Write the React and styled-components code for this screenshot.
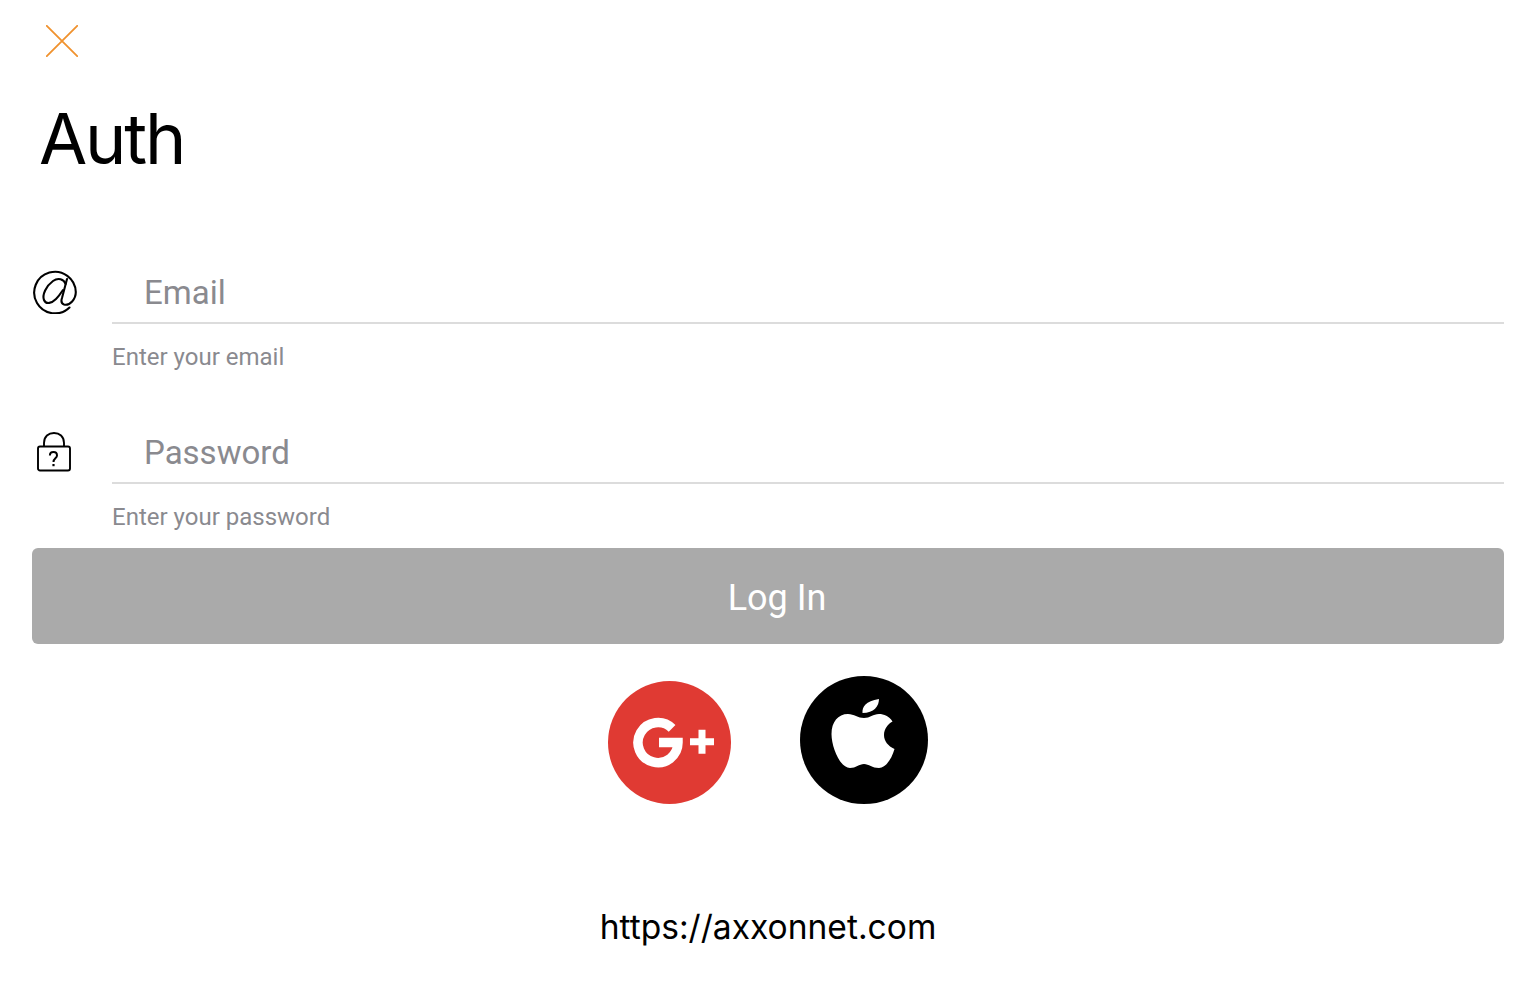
import React from 'react';
import styled, { createGlobalStyle } from 'styled-components';

const GlobalStyle = createGlobalStyle`
  html, body {
    margin: 0;
    padding: 0;
    background: #fff;
  }
  * {
    box-sizing: border-box;
  }
`;

const Page = styled.div`
  width: 1532px;
  height: 1002px;
  padding: 25px 28px 0 32px;
  overflow: hidden;
  font-family: Roboto, "Liberation Sans", sans-serif;
`;

const CloseButton = styled.button`
  display: block;
  width: 32px;
  height: 32px;
  margin-left: 14px;
  padding: 0;
  border: none;
  background: none;
  line-height: 0;
`;

const Title = styled.h1`
  margin: 40px 0 0 7px;
  height: 86px;
  font-family: Inter, "Liberation Sans", sans-serif;
  font-size: 70px;
  line-height: 84px;
  font-weight: 400;
  letter-spacing: -2.2px;
  color: #000;
`;

const Form = styled.form`
  margin-top: 84px;
`;

const Field = styled.div`
  display: flex;
  height: 160px;
`;

const FieldIcon = styled.div`
  flex: 0 0 80px;
  padding-top: ${({ top }) => top}px;
  padding-left: ${({ left }) => left}px;
  line-height: 0;
`;

const FieldBody = styled.div`
  flex: 1;
`;

const Input = styled.input`
  display: block;
  width: 100%;
  height: 57px;
  padding: 0 0 4px 32px;
  border: none;
  border-bottom: 2px solid #dcdcdc;
  outline: none;
  background: none;
  font-family: inherit;
  font-size: 33px;
  color: #222;

  &::placeholder {
    color: #8a8a8f;
    opacity: 1;
  }
`;

const Hint = styled.div`
  margin-top: 17px;
  font-size: 24px;
  line-height: 32px;
  color: #8a8a8f;
`;

const LoginButton = styled.button`
  display: block;
  width: 100%;
  height: 96px;
  margin-top: -39px;
  padding: 4px 0 0 18px;
  border: none;
  border-radius: 6px;
  background: #aaaaaa;
  font-family: inherit;
  font-size: 36px;
  color: #fff;
`;

const Socials = styled.div`
  display: flex;
  justify-content: center;
  align-items: flex-end;
  gap: 69px;
  margin-top: 32px;
`;

const SocialCircle = styled.div`
  display: flex;
  align-items: center;
  justify-content: center;
  width: ${({ size }) => size}px;
  height: ${({ size }) => size}px;
  border-radius: 50%;
  background: ${({ color }) => color};
`;

const Url = styled.div`
  margin-top: 100px;
  text-align: center;
  font-family: Inter, "Liberation Sans", sans-serif;
  font-size: 33.6px;
  line-height: 46px;
  color: #000;
`;

function CloseIcon() {
  return (
    <svg width="32" height="32" viewBox="0 0 32 32" fill="none" stroke="#f0922e" strokeWidth="1.8" strokeLinecap="round">
      <path d="M0.8 0.8 L31.2 31.2 M31.2 0.8 L0.8 31.2" />
    </svg>
  );
}

function AtIcon() {
  return (
    <svg width="44" height="44" viewBox="0 0 44 44" fill="none" stroke="#000" strokeWidth="2.1" strokeLinecap="round">
      <path d="M36.5 37.5 A20.8 20.8 0 1 1 42.8 22 C42.8 29 37 36 31 34.5 C28 33.5 28 31 29 28 L34 9" />
      <path d="M32.6 14 C31 9 25 7.5 20 11 C13 16 9 25 11 30 C13 35 19 33 23 29 C26 26 28 23 30 20" />
    </svg>
  );
}

function LockIcon() {
  return (
    <svg width="36" height="42" viewBox="0 0 36 42" fill="none" stroke="#000" strokeWidth="1.9">
      <rect x="1" y="14.5" width="32" height="24" rx="2" />
      <path d="M7 14.5 V11 C7 4.5 11.5 1 17 1 C22.5 1 27 4.5 27 11 V14.5" />
      <path d="M12.9 23.5 C12.9 18.9 20 18.9 20 23.5 C20 26.5 16.5 26.3 16.5 30" strokeWidth="2" />
      <path d="M16.5 32 V34.2" strokeWidth="2.2" />
    </svg>
  );
}

function GooglePlusIcon() {
  return (
    <svg width="123" height="123" viewBox="0 0 123 123" fill="none" stroke="#fff">
      <path d="M64.1 47.4 A20 20 0 1 0 70 61.5 H51" strokeWidth="9.5" />
      <path d="M82 60.7 H106 M94 48.7 V72.7" strokeWidth="7" />
    </svg>
  );
}

function AppleIcon() {
  return (
    <svg width="80" height="85" viewBox="0 0 80 85" fill="#fff" style={{ marginBottom: 15 }}>
      <path d="M40 28 C34 28 30 24 24 24 C14 24 7.5 32 7.5 44 C7.5 57 16 78 26 78 C32 78 35 74 40 74 C45 74 48 78 55 78 C62 78 68 68 70.5 59 C64 56 60 51 60 45 C60 39 64 34 68.5 31.5 C65 26 60 24 55 24 C49 24 46 28 40 28 Z" />
      <path d="M38.5 23 C38 17 41.5 11 55 9 C55 16 50 23 38.5 23 Z" />
    </svg>
  );
}

export default function App() {
  return (
    <>
      <GlobalStyle />
      <Page>
        <CloseButton type="button" aria-label="Close">
          <CloseIcon />
        </CloseButton>
        <Title>Auth</Title>
        <Form>
          <Field>
            <FieldIcon top={3} left={1}>
              <AtIcon />
            </FieldIcon>
            <FieldBody>
              <Input placeholder="Email" />
              <Hint>Enter your email</Hint>
            </FieldBody>
          </Field>
          <Field>
            <FieldIcon top={5} left={5}>
              <LockIcon />
            </FieldIcon>
            <FieldBody>
              <Input placeholder="Password" />
              <Hint>Enter your password</Hint>
            </FieldBody>
          </Field>
          <LoginButton type="button">Log In</LoginButton>
        </Form>
        <Socials>
          <SocialCircle size={123} color="#e03a33">
            <GooglePlusIcon />
          </SocialCircle>
          <SocialCircle size={128} color="#000">
            <AppleIcon />
          </SocialCircle>
        </Socials>
        <Url>https://axxonnet.com</Url>
      </Page>
    </>
  );
}
